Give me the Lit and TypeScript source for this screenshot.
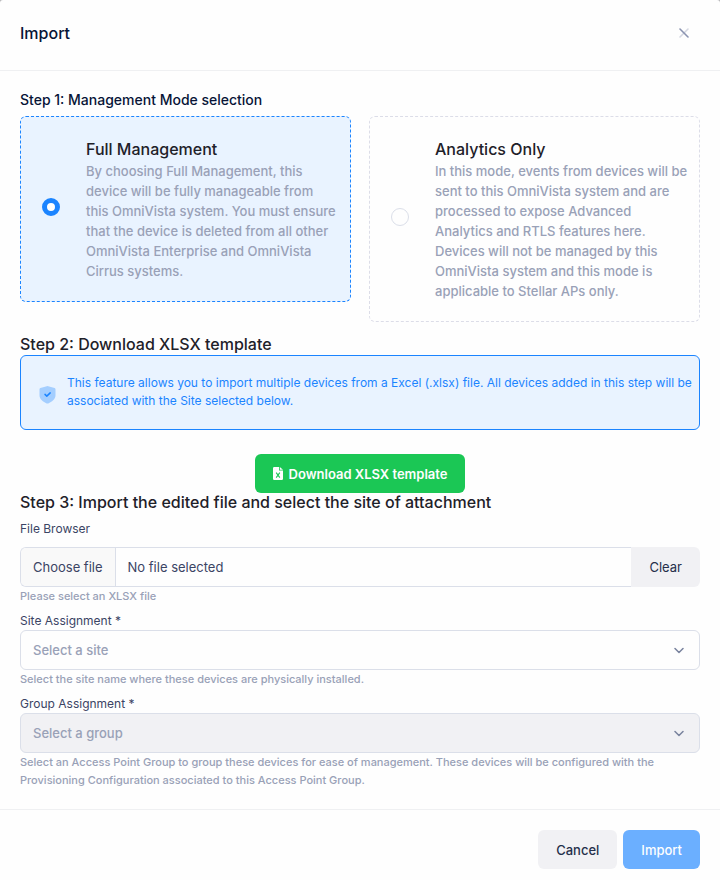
import { LitElement, html, css, svg } from "lit";
import { customElement, state } from "lit/decorators.js";
import { classMap } from "lit/directives/class-map.js";

interface Mode {
  id: string;
  title: string;
  text: string;
}

const MODES: Mode[] = [
  {
    id: "full",
    title: "Full Management",
    text: "By choosing Full Management, this device will be fully manageable from this OmniVista system. You must ensure that the device is deleted from all other OmniVista Enterprise and OmniVista Cirrus systems.",
  },
  {
    id: "analytics",
    title: "Analytics Only",
    text: "In this mode, events from devices will be sent to this OmniVista system and are processed to expose Advanced Analytics and RTLS features here. Devices will not be managed by this OmniVista system and this mode is applicable to Stellar APs only.",
  },
];

const chevron = svg`<path d="M1 1.5 5 5.5 9 1.5" fill="none" stroke="#78829d" stroke-width="1.5" stroke-linecap="round" stroke-linejoin="round"/>`;

@customElement("app-root")
export class AppRoot extends LitElement {
  @state() private mode = "full";
  @state() private fileName = "";

  static styles = css`
    :host {
      display: flex;
      flex-direction: column;
      min-height: 100vh;
      background: #b5b5b8;
      font: 400 13px/18px Inter, "Liberation Sans", sans-serif;
      color: #3b4464;
    }
    * {
      box-sizing: border-box;
    }
    button,
    input,
    select {
      font: inherit;
      color: inherit;
      margin: 0;
    }
    .dialog {
      flex: 1;
      background: #fefefe;
      border-radius: 3px 3px 0 0;
    }
    .header {
      display: flex;
      align-items: center;
      justify-content: space-between;
      padding: 20px 20px 24px;
      border-bottom: 1px solid #eff0f2;
    }
    .title {
      margin: 0;
      font-size: 16px;
      line-height: 26px;
      font-weight: 500;
      color: #071437;
    }
    .close {
      display: flex;
      padding: 8px 11px;
      margin: 0;
      border: 0;
      background: none;
    }
    .body {
      padding: 20px;
    }
    .modes {
      margin: 0;
      padding: 0;
      border: 0;
      min-width: 0;
    }
    .legend {
      padding: 0;
      margin-bottom: 8px;
      font-size: 14px;
      font-weight: 500;
      line-height: 17px;
      color: #071437;
    }
    .cards {
      display: grid;
      grid-template-columns: 1fr 1fr;
      gap: 18px;
      align-items: start;
    }
    .card {
      display: flex;
      align-items: center;
      gap: 26px;
      padding: 20px 11px 20px 21px;
      border: 1px dashed #dcdde8;
      border-radius: 6px;
    }
    .card.active {
      background: #e9f3ff;
      border-color: #1b84ff;
    }
    .radio {
      appearance: none;
      flex: none;
      width: 18px;
      height: 18px;
      margin-bottom: 4px;
      border: 1px solid #dbdfe9;
      border-radius: 50%;
      background: #fefefe;
    }
    .radio:checked {
      border: 5px solid #1b84ff;
    }
    .card-title {
      display: block;
      font-size: 16px;
      line-height: 24px;
      font-weight: 500;
      color: #1e2129;
    }
    .card-text {
      display: block;
      line-height: 20px;
      font-weight: 500;
      color: #99a1b7;
    }
    .step {
      margin: 0;
      font-size: 16px;
      line-height: 18px;
      font-weight: 500;
      color: #1e2129;
    }
    .step-two {
      margin: 13px 0 2px;
    }
    .notice {
      display: flex;
      align-items: center;
      gap: 11px;
      padding: 18px 6px 17px 18px;
      border: 1px solid #1b84ff;
      border-radius: 6px;
      background: #e9f3ff;
      color: #1b84ff;
      font-size: 12px;
    }
    .notice p {
      margin: 0 0 2px;
    }
    .shield {
      flex: none;
      margin-top: 4px;
    }
    .center {
      display: flex;
      justify-content: center;
      margin-top: 24px;
    }
    .btn {
      display: flex;
      align-items: center;
      gap: 6px;
      height: 39px;
      padding: 0 18px;
      border: 0;
      border-radius: 6px;
      background: #f1f1f4;
      font-weight: 500;
      color: #252f4a;
    }
    .download {
      background: #1bc755;
      color: #fefefe;
      font-weight: 600;
    }
    .primary {
      background: #6bafff;
      color: #fefefe;
    }
    .label {
      display: block;
      font-size: 12px;
      margin-top: 7px;
    }
    .file-label {
      margin: 9px 0;
    }
    .file {
      display: flex;
      height: 40px;
    }
    .picker {
      flex: 1;
      display: flex;
      position: relative;
      border: 1px solid #dbdfe9;
      border-right: 0;
      border-radius: 6px 0 0 6px;
      overflow: hidden;
    }
    .picker input {
      position: absolute;
      inset: 0;
      width: 100%;
      opacity: 0;
    }
    .choose,
    .name {
      display: flex;
      align-items: center;
      padding: 0 12px;
    }
    .choose {
      background: #f9f9f9;
      border-right: 1px solid #dbdfe9;
    }
    .clear {
      height: 40px;
      border-radius: 0 6px 6px 0;
      font-weight: 400;
    }
    .help {
      margin: 0;
      font-size: 11px;
      color: #99a1b7;
      font-weight: 500;
    }
    .select {
      display: grid;
      align-items: center;
    }
    .select select,
    .select svg {
      grid-area: 1 / 1;
    }
    .select svg {
      justify-self: end;
      margin-right: 16px;
      pointer-events: none;
    }
    .select select {
      appearance: none;
      width: 100%;
      height: 40px;
      padding: 0 36px 0 12px;
      border: 1px solid #dbdfe9;
      border-radius: 6px;
      background: #fefefe;
      color: #99a1b7;
      font-weight: 500;
      opacity: 1;
    }
    .select select:disabled {
      background: #f1f1f4;
    }
    .footer {
      display: flex;
      justify-content: flex-end;
      gap: 6px;
      padding: 20px 20px 11px;
      border-top: 1px solid #eff0f2;
    }
  `;

  private pickFile(e: Event) {
    this.fileName = (e.target as HTMLInputElement).files?.[0]?.name ?? "";
  }

  private clearFile() {
    const input = this.renderRoot.querySelector<HTMLInputElement>("#file");
    if (input) input.value = "";
    this.fileName = "";
  }

  private renderMode(m: Mode) {
    return html`<label class=${classMap({ card: true, active: this.mode === m.id })}>
      <input class="radio" type="radio" name="mode" .value=${m.id}
        ?checked=${this.mode === m.id} @change=${() => (this.mode = m.id)} />
      <span>
        <span class="card-title">${m.title}</span>
        <span class="card-text">${m.text}</span>
      </span>
    </label>`;
  }

  private renderSelect(id: string, label: string, placeholder: string, help: string, disabled = false) {
    return html`<label class="label" for=${id}>${label} *</label>
      <div class="select">
        <select id=${id} ?disabled=${disabled}><option>${placeholder}</option></select>
        <svg width="10" height="7" viewBox="0 0 10 7" aria-hidden="true">${chevron}</svg>
      </div>
      <p class="help">${help}</p>`;
  }

  render() {
    return html`<div class="dialog" role="dialog" aria-labelledby="title">
      <header class="header">
        <h1 class="title" id="title">Import</h1>
        <button class="close" aria-label="Close">
          <svg width="10" height="10" viewBox="0 0 10 10" fill="none" stroke="#8a93b0" stroke-width="1.6" stroke-linecap="round">
            <path d="M9 1 1 9" opacity=".35" />
            <path d="M1 1 9 9" />
          </svg>
        </button>
      </header>
      <main class="body">
        <fieldset class="modes">
          <legend class="legend">Step 1: Management Mode selection</legend>
          <div class="cards">${MODES.map((m) => this.renderMode(m))}</div>
        </fieldset>

        <h2 class="step step-two">Step 2: Download XLSX template</h2>
        <div class="notice">
          <svg class="shield" width="17" height="18" viewBox="0 0 17 18" aria-hidden="true">
            <path d="M1.4 2 7.8.2q.7-.2 1.4 0L15.6 2q.9.3.9 1.2v6.3c0 3.6-3.8 6.3-7.2 7.9q-.8.3-1.6 0C4.3 15.8.5 13.1.5 9.5V3.2Q.5 2.3 1.4 2Z" fill="#a4ceff" />
            <path d="m6 8.4 1.8 1.7L11.2 6.9" fill="none" stroke="#1b84ff" stroke-width="1.5" stroke-linecap="round" stroke-linejoin="round" />
          </svg>
          <p>This feature allows you to import multiple devices from a Excel (.xlsx) file. All devices added in this step will be associated with the Site selected below.</p>
        </div>
        <div class="center">
          <button class="btn download">
            <svg width="10" height="13" viewBox="0 0 10 13" aria-hidden="true">
              <path d="M1.2 0H6v3.4h4v8.4q0 1.2-1.2 1.2H1.2Q0 13 0 11.8V1.2Q0 0 1.2 0ZM6.8 0 10 2.7H6.8Z" fill="#fefefe" />
              <path d="m3.2 5.6 3.6 5M6.8 5.6l-3.6 5" stroke="#1bc755" stroke-width="1.1" />
            </svg>
            Download XLSX template
          </button>
        </div>

        <h2 class="step">Step 3: Import the edited file and select the site of attachment</h2>
        <label class="label file-label" for="file">File Browser</label>
        <div class="file">
          <div class="picker">
            <span class="choose">Choose file</span>
            <span class="name">${this.fileName || "No file selected"}</span>
            <input id="file" type="file" accept=".xlsx" @change=${this.pickFile} />
          </div>
          <button class="btn clear" @click=${this.clearFile}>Clear</button>
        </div>
        <p class="help">Please select an XLSX file</p>
        ${this.renderSelect("site", "Site Assignment", "Select a site", "Select the site name where these devices are physically installed.")}
        ${this.renderSelect("group", "Group Assignment", "Select a group", "Select an Access Point Group to group these devices for ease of management. These devices will be configured with the Provisioning Configuration associated to this Access Point Group.", true)}
      </main>
      <footer class="footer">
        <button class="btn">Cancel</button>
        <button class="btn primary">Import</button>
      </footer>
    </div>`;
  }
}
